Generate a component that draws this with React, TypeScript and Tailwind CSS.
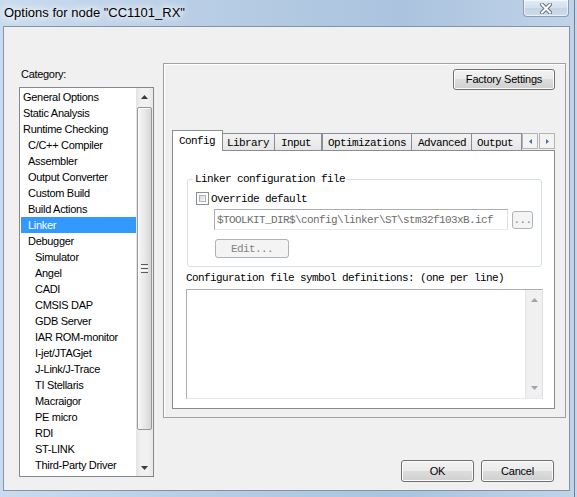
import React from "react";

const items: [string, number][] = [
  ["General Options", 0],
  ["Static Analysis", 0],
  ["Runtime Checking", 0],
  ["C/C++ Compiler", 1],
  ["Assembler", 1],
  ["Output Converter", 1],
  ["Custom Build", 1],
  ["Build Actions", 1],
  ["Linker", 1],
  ["Debugger", 1],
  ["Simulator", 2],
  ["Angel", 2],
  ["CADI", 2],
  ["CMSIS DAP", 2],
  ["GDB Server", 2],
  ["IAR ROM-monitor", 2],
  ["I-jet/JTAGjet", 2],
  ["J-Link/J-Trace", 2],
  ["TI Stellaris", 2],
  ["Macraigor", 2],
  ["PE micro", 2],
  ["RDI", 2],
  ["ST-LINK", 2],
  ["Third-Party Driver", 2],
];

const MONO = "[font-family:'Liberation_Mono','Courier_New',monospace] text-[11px] tracking-[-0.6px] leading-[12px]";

function UpArrow({ c = "#3a3a3a" }: { c?: string }) {
  return (
    <svg width="7" height="4" viewBox="0 0 7 4">
      <path d="M3.5 0 L7 4 L0 4 Z" fill={c} />
    </svg>
  );
}
function DownArrow({ c = "#3a3a3a" }: { c?: string }) {
  return (
    <svg width="7" height="4" viewBox="0 0 7 4">
      <path d="M0 0 L7 0 L3.5 4 Z" fill={c} />
    </svg>
  );
}

function WinButton({ className, children }: { className: string; children: React.ReactNode }) {
  return (
    <div
      className={
        "box-border flex items-center justify-center rounded-[3px] border border-[#707070] bg-[linear-gradient(#f2f2f2,#ebebeb_50%,#dddddd_50%,#cfcfcf)] shadow-[inset_0_0_0_1px_#fcfcfc] text-[11px] leading-[13px] tracking-[-0.2px] " +
        className
      }
    >
      {children}
    </div>
  );
}

function DisabledButton({ className, children }: { className: string; children: React.ReactNode }) {
  return (
    <div
      className={
        "box-border flex items-center justify-center rounded-[3px] border border-[#adb2b5] bg-[#f4f4f4] text-[#838383] " +
        className
      }
    >
      {children}
    </div>
  );
}

function ListScrollbar() {
  return (
    <div className="w-[17px] h-full flex flex-col items-center bg-[linear-gradient(90deg,#e3e3e3,#f1f1f1_30%,#f1f1f1_70%,#e6e6e6)]">
      <div className="h-[17px] w-full flex items-center justify-center shrink-0">
        <UpArrow />
      </div>
      <div className="mt-[2px] w-[15px] h-[323px] shrink-0 rounded-[2px] border border-[#979797] bg-[linear-gradient(90deg,#f6f6f6,#e9e9e9_50%,#d6d6d6)] shadow-[inset_1px_1px_0_#ffffff] flex flex-col items-center justify-center gap-[1px]">
        <div className="w-[7px] h-[1px] bg-[#5a5a5a]" />
        <div className="w-[7px] h-[1px] bg-[#ffffff]" />
        <div className="w-[7px] h-[1px] bg-[#5a5a5a]" />
        <div className="w-[7px] h-[1px] bg-[#ffffff]" />
        <div className="w-[7px] h-[1px] bg-[#5a5a5a]" />
      </div>
      <div className="flex-1" />
      <div className="h-[17px] w-full flex items-center justify-center shrink-0">
        <DownArrow />
      </div>
    </div>
  );
}

function CloseGlyph() {
  return (
    <svg width="12" height="11" viewBox="0 0 12 11">
      <path d="M2 1.5 L10 9.5 M10 1.5 L2 9.5" stroke="#5f6f82" strokeWidth="4" strokeLinecap="square" />
      <path d="M2 1.5 L10 9.5 M10 1.5 L2 9.5" stroke="#ffffff" strokeWidth="2" strokeLinecap="square" />
    </svg>
  );
}

export default function App() {
  return (
    <div className="w-[577px] h-[497px] flex bg-[#b9cde3] [font-family:'Liberation_Sans',Arial,sans-serif] text-black overflow-hidden">
      <div className="w-[575px] h-full flex flex-col border-r border-[#6e8198] bg-[linear-gradient(90deg,#c9dbee_0%,#b6cce4_40%,#abc3de_70%,#c0d3e9_100%)]">
        {/* Title bar */}
        <div className="h-[26px] shrink-0 flex items-start">
          <span className="pl-[4px] pt-[5px] text-[13px] leading-[16px] whitespace-nowrap text-[#000] [text-shadow:0_0_6px_#ffffff,0_0_10px_#ffffff,0_0_14px_#ffffff]">
            Options for node "CC1101_RX"
          </span>
          <div className="ml-auto mr-[5px] w-[46px] h-[17px] rounded-b-[4px] border border-t-0 border-[#8d9db2] bg-[linear-gradient(#e3ecf6,#d2dfee_50%,#c4d4e7_50%,#cddbec)] shadow-[inset_0_0_0_1px_rgba(255,255,255,0.6)] flex items-center justify-center">
            <CloseGlyph />
          </div>
        </div>

        {/* Client area */}
        <div className="ml-[3px] mr-[4px] mb-[6px] flex-1 border border-[#8593a4] bg-[#f0f0f0] flex">
          {/* Left: category */}
          <div className="pl-[15px] pt-[39px] flex flex-col shrink-0">
            <div className="text-[11px] leading-[16px] tracking-[-0.3px] pl-[2px]">Category:</div>
            <div className="mt-[5px] w-[135px] h-[390px] border border-[#828790] bg-white flex">
              <div className="w-[116px] pl-[1px] pt-[1px] flex flex-col">
                {items.map(([name, lvl]) => {
                  const sel = name === "Linker";
                  const pad = lvl === 0 ? "pl-[2px]" : lvl === 1 ? "pl-[7px]" : "pl-[14px]";
                  return (
                    <div
                      key={name}
                      className={
                        "h-[16px] text-[11px] leading-[16px] tracking-[-0.3px] whitespace-nowrap " +
                        pad +
                        (sel ? " bg-[#3399ff] text-white" : " text-black")
                      }
                    >
                      {name}
                    </div>
                  );
                })}
              </div>
              <ListScrollbar />
            </div>
          </div>

          {/* Right */}
          <div className="ml-[9px] pt-[36px] w-[403px] flex flex-col shrink-0">
            <div className="h-[355px] border border-[#a0a0a0] shadow-[inset_1px_1px_0_#ffffff] flex flex-col">
              <div className="flex justify-end pr-[10px] pt-[5px]">
                <WinButton className="w-[102px] h-[21px]">Factory Settings</WinButton>
              </div>

              {/* Tabs */}
              <div className={"mt-[40px] ml-[8px] h-[20px] flex items-end " + MONO}>
                <div className="relative z-10 w-[51px] h-[21px] -mb-[1px] -mr-[1px] border border-b-0 border-[#898c95] bg-white pl-[6px] pt-[4px]">
                  Config
                </div>
                <div className="w-[53px] h-[17px] border border-b-0 border-[#898c95] bg-[linear-gradient(#f3f3f3,#e6e6e6)] pl-[4px] pt-[3px]">
                  Library
                </div>
                <div className="w-[47px] h-[17px] border border-b-0 border-l-0 border-[#898c95] bg-[linear-gradient(#f3f3f3,#e6e6e6)] pl-[6px] pt-[3px]">
                  Input
                </div>
                <div className="w-[90px] h-[17px] border border-b-0 border-[#898c95] bg-[linear-gradient(#f3f3f3,#e6e6e6)] pl-[5px] pt-[3px]">
                  Optimizations
                </div>
                <div className="w-[60px] h-[17px] border border-b-0 border-l-0 border-[#898c95] bg-[linear-gradient(#f3f3f3,#e6e6e6)] pl-[6px] pt-[3px]">
                  Advanced
                </div>
                <div className="w-[50px] h-[17px] border border-b-0 border-l-0 border-[#898c95] bg-[linear-gradient(#f3f3f3,#e6e6e6)] pl-[5px] pt-[3px]">
                  Output
                </div>
                <div className="mb-[1px] w-[16px] h-[16px] border border-[#b4b4b4] bg-[#f3f3f3] flex items-center justify-center">
                  <svg width="3" height="5" viewBox="0 0 3 5">
                    <path d="M3 0 L3 5 L0 2.5 Z" fill="#4d6ea3" />
                  </svg>
                </div>
                <div className="mb-[1px] ml-[1px] w-[16px] h-[16px] border border-[#b4b4b4] bg-[#f3f3f3] flex items-center justify-center">
                  <svg width="3" height="5" viewBox="0 0 3 5">
                    <path d="M0 0 L3 2.5 L0 5 Z" fill="#4d6ea3" />
                  </svg>
                </div>
              </div>

              {/* Tab content */}
              <div className={"ml-[8px] w-[383px] h-[259px] border border-[#898c95] bg-white flex flex-col " + MONO}>
                <div className="relative mt-[28px] ml-[14px] w-[355px] h-[88px] border border-[#d5dfe5] rounded-[3px] pt-[12px] pl-[8px] flex flex-col">
                  <span className="absolute left-[5px] -top-[7px] bg-white px-[2px] whitespace-nowrap">
                    Linker configuration file
                  </span>
                  <div className="h-[13px] flex items-center">
                    <div className="w-[13px] h-[13px] border border-[#8e8f8f] bg-white p-[2px] shrink-0">
                      <div className="w-full h-full border border-[#aeb3b9] bg-[linear-gradient(135deg,#d9dcdf,#f6f6f6)]" />
                    </div>
                    <span className="ml-[2px] whitespace-nowrap">Override default</span>
                  </div>
                  <div className="mt-[4px] ml-[18px] flex items-start">
                    <div className="w-[294px] h-[21px] border border-[#abadb3] border-b-[#e3e9ef] border-r-[#dbdfe6] bg-white flex items-center pl-[2px] text-[#6d6d6d] whitespace-nowrap overflow-hidden">
                      $TOOLKIT_DIR$\config\linker\ST\stm32f103xB.icf
                    </div>
                    <DisabledButton className="ml-[4px] mt-[2px] w-[21px] h-[18px]">...</DisabledButton>
                  </div>
                  <DisabledButton className="mt-[9px] ml-[19px] w-[74px] h-[19px]">Edit...</DisabledButton>
                </div>

                <div className="mt-[5px] ml-[13px] whitespace-nowrap">
                  Configuration file symbol definitions: (one per line)
                </div>
                <div className="mt-[5px] ml-[13px] w-[357px] h-[110px] border border-[#abadb3] border-b-[#e3e9ef] border-r-[#dbdfe6] bg-white flex justify-end">
                  <div className="w-[17px] h-full bg-[#f0f0f0] border-l border-[#e6e6e6] flex flex-col justify-between items-center pt-[8px] pb-[8px]">
                    <UpArrow c="#a3a3a3" />
                    <DownArrow c="#a3a3a3" />
                  </div>
                </div>
              </div>
            </div>

            {/* OK / Cancel */}
            <div className="mt-[42px] flex justify-end pr-[12px] gap-[7px]">
              <WinButton className="w-[73px] h-[22px]">OK</WinButton>
              <WinButton className="w-[73px] h-[22px]">Cancel</WinButton>
            </div>
          </div>
        </div>
      </div>
      <div className="w-[2px] h-full bg-[#c7d7e8]" />
    </div>
  );
}
